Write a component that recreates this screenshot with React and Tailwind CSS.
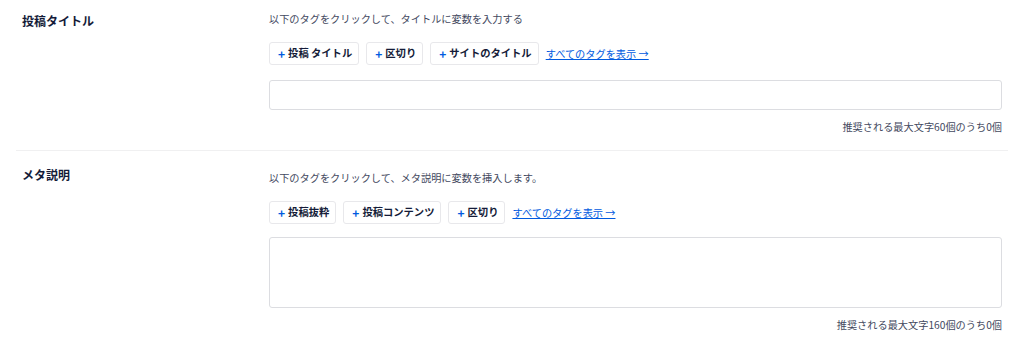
import React from "react";

const font = { fontFamily: '"Noto Sans CJK JP", "Noto Sans", sans-serif' };

function TagButton({ label }) {
  return (
    <button className="flex h-[23px] items-center rounded-[3px] border border-[#e8e8eb] bg-white pl-[8px] pr-[6px] text-[10.3px] font-bold leading-none text-[#141b38]">
      <span className="mr-[3px] text-[12px] font-bold text-[#005ae0]">+</span>
      <span>{label}</span>
    </button>
  );
}

function Section({ title, desc, tags, tall, counter, labelTop, inputGap }) {
  return (
    <div className="flex">
      <div className={`w-[253px] shrink-0 pl-[6px] ${labelTop}`}>
        <div className="text-[12px] font-bold leading-[16px] text-[#141b38]">{title}</div>
      </div>
      <div className="flex-1 pr-[6px]">
        <div className="text-[10.2px] leading-[16px] text-[#434960]">{desc}</div>
        <div className="mt-[15px] flex items-center gap-[7px]">
          {tags.map((t) => (
            <TagButton key={t} label={t} />
          ))}
          <a className="text-[10.2px] text-[#005ae0] underline" href="#">
            すべてのタグを表示 →
          </a>
        </div>
        <div
          className={`${inputGap} w-full rounded-[3px] border border-[#dcdde1] bg-white ${
            tall ? "h-[71px]" : "h-[30px]"
          }`}
        />
        <div className="mt-[9px] text-right text-[10.2px] leading-[16px] text-[#434960]">
          {counter}
        </div>
      </div>
    </div>
  );
}

export default function App() {
  return (
    <div className="min-h-[342px] w-[1024px] bg-white" style={font}>
      <div className="pl-[16px] pr-[16px]">
        <div className="pt-[11px] pb-[15px]">
          <Section
            title="投稿タイトル"
            desc="以下のタグをクリックして、タイトルに変数を入力する"
            tags={["投稿 タイトル", "区切り", "サイトのタイトル"]}
            counter="推奨される最大文字60個のうち0個"
            labelTop="pt-[2px]"
            inputGap="mt-[15px]"
          />
        </div>
        <div className="h-px bg-[#f0f0f1]" />
        <div className="pt-[19px]">
          <Section
            title="メタ説明"
            desc="以下のタグをクリックして、メタ説明に変数を挿入します。"
            tags={["投稿抜粋", "投稿コンテンツ", "区切り"]}
            counter="推奨される最大文字160個のうち0個"
            labelTop="-mt-[3px]"
            inputGap="mt-[13px]"
            tall
          />
        </div>
      </div>
    </div>
  );
}
